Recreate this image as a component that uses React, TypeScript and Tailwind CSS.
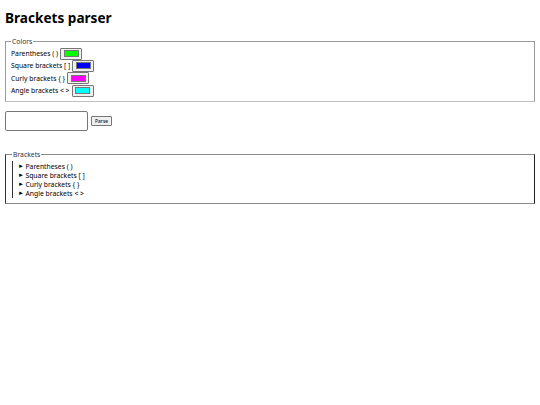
import React from "react";

const font = { fontFamily: '"Noto Sans", "Open Sans", sans-serif' };

function Swatch({ color }: { color: string }) {
  return (
    <span className="inline-flex h-[12px] w-[22px] items-center justify-center rounded-[1px] border border-[#767676] bg-[#efefef] ml-[2px]">
      <span className="block h-[7px] w-[15px] border border-[#777]" style={{ background: color }} />
    </span>
  );
}

const rows = [
  { label: "Parentheses ( )", color: "#00ff00" },
  { label: "Square brackets [ ]", color: "#0000ff" },
  { label: "Curly brackets { }", color: "#ff00ff" },
  { label: "Angle brackets < >", color: "#00ffff" },
];

export default function App() {
  return (
    <div className="min-h-[405px] w-[540px] bg-white px-[5px] pt-[7px] text-[6.8px] text-black" style={font}>
      <h1 className="text-[13.6px] font-bold leading-[22px]">Brackets parser</h1>

      <fieldset className="mt-[8px] border border-[#9a9a9a] border-b-[#c0c0c0] px-[5px] pb-[5px] pt-[1px]">
        <legend className="px-[1px] leading-[9px] text-[#333]">Colors</legend>
        <div className="flex flex-col gap-[1px] pt-[1px]">
          {rows.map((r) => (
            <div key={r.label} className="flex h-[11.3px] items-center">
              <span className="leading-[9px]">{r.label}</span>
              <Swatch color={r.color} />
            </div>
          ))}
        </div>
      </fieldset>

      <div className="mt-[9px] flex items-center gap-[3px]">
        <div className="h-[20px] w-[83px] rounded-[2px] border border-[#767676] bg-white" />
        <button className="h-[10px] rounded-[1px] border border-[#767676] bg-[#efefef] px-[3px] text-[5px] leading-[8px]">
          Parse
        </button>
      </div>

      <fieldset className="mt-[19px] border border-[#8a8a8a] border-r-[#222] border-l-[#333] px-[6px] pb-[5px] pt-[2px]">
        <legend className="px-[1px] leading-[9px] text-[#333]">Brackets</legend>
        <div className="border-l border-[#333] pl-[5px] pt-[1px]">
          {rows.map((r) => (
            <div key={r.label} className="flex h-[9px] items-center">
              <span className="mr-[1.5px] text-[6px] leading-[9px]">►</span>
              <span className="leading-[9px]">{r.label}</span>
            </div>
          ))}
        </div>
      </fieldset>
    </div>
  );
}
